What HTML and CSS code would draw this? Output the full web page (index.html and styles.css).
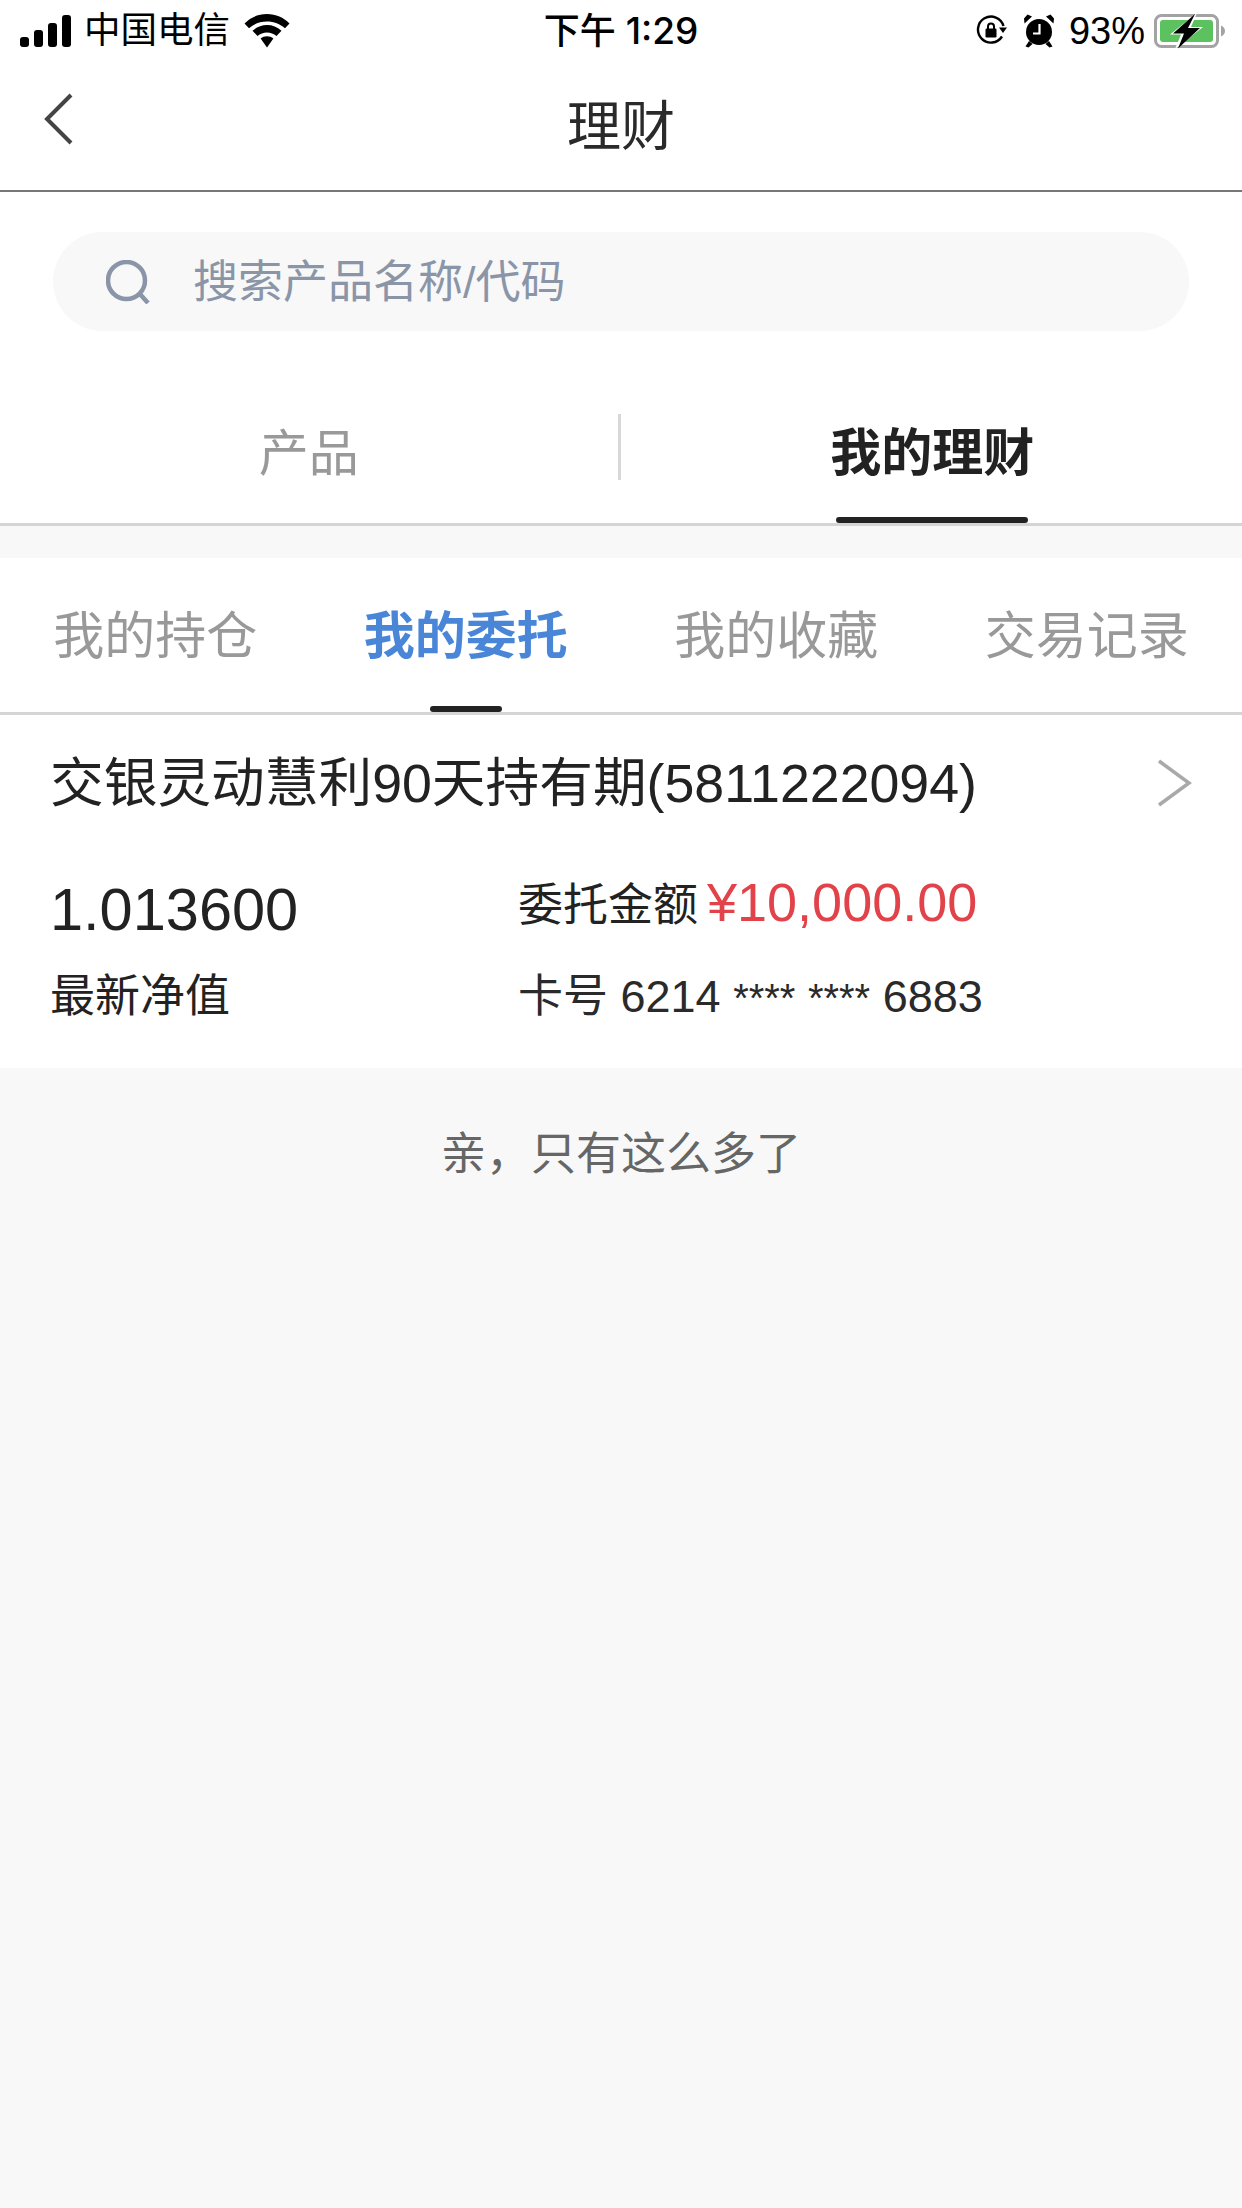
FILE: index.html
```html
<!DOCTYPE html>
<html lang="zh-CN">
<head>
<meta charset="utf-8">
<title>理财</title>
<link rel="stylesheet" href="styles.css">
</head>
<body>
<div class="page">
  <header class="status">
    <div class="status-left">
      <svg class="signal" width="52" height="32" viewBox="0 0 52 32"><rect x="0" y="22" width="9" height="10" rx="3"/><rect x="14" y="15" width="9" height="17" rx="3"/><rect x="28" y="8" width="9" height="24" rx="3"/><rect x="42" y="0" width="9" height="32" rx="3"/></svg>
      <span class="carrier">中国电信</span>
      <svg class="wifi" width="46" height="34" viewBox="0 0 46 34"><path d="M23 0C14 0 6.500 3.500 0.500 9.500L5 14.200C10 9.800 16 7.400 23 7.400S36 9.800 41 14.200L45.500 9.500C39.500 3.500 32 0 23 0Z"/><path d="M23 11C17.500 11 12.800 13 8.500 16.800L13.500 22C16.200 19.800 19.400 18.600 23 18.600S29.800 19.800 32.500 22L37.500 16.800C33.200 13 28.500 11 23 11Z"/><path d="M23 22.200C20.500 22.200 18.500 23 16.600 24.500L23 33.500L29.400 24.500C27.500 23 25.500 22.200 23 22.200Z"/></svg>
    </div>
    <div class="clock">下午 <span class="clock-time">1:29</span></div>
    <div class="status-right">
      <svg class="lock" width="32" height="32" viewBox="0 0 32 32"><path d="M26 21.500A13 13 0 1 1 27.500 11" fill="none" stroke="#000" stroke-width="2.400"/><path d="M23 12.500H31L27 18Z"/><rect x="9.500" y="13.500" width="11" height="9" rx="1.200"/><path d="M12 14V11.500A3 3 0 0 1 18 11.500V14" fill="none" stroke="#000" stroke-width="2"/></svg>
      <svg class="alarm" width="30" height="34" viewBox="0 0 30 34"><circle cx="15" cy="18" r="13"/><path d="M0.500 9.500L8 2.500L3.500 0.500L0 4.500ZM29.500 9.500L22 2.500L26.500 0.500L30 4.500ZM5 27L1.500 32.500L4.500 33.500L8.500 30ZM25 27L28.500 32.500L25.500 33.500L21.500 30Z"/><path d="M15.500 10V19.500H9" fill="none" stroke="#fff" stroke-width="2.200"/></svg>
      <span class="battery-text">93%</span>
      <svg class="battery" width="72" height="36" viewBox="0 0 72 36"><rect x="1.500" y="2.500" width="62" height="31" rx="6" fill="none" stroke="#a3a3a3" stroke-width="3"/><rect x="6" y="7" width="53" height="22" rx="3" fill="#5bc25f"/><path d="M67 12.500C69.500 13.500 71 15.500 71 18S69.500 22.500 67 23.500Z" fill="#a3a3a3"/><path d="M43 0L16 21.500H27L21 36L49 14H37Z" fill="#fff"/><path d="M41 1L19 20.500H30L24 35.500L46 15H34Z" fill="#000"/></svg>
    </div>
  </header>

  <nav class="nav">
    <svg class="back" width="30" height="52" viewBox="0 0 30 52"><path d="M27 2L3 26L27 50" fill="none" stroke="#444" stroke-width="4"/></svg>
    <h1 class="title">理财</h1>
    <span class="nav-spacer"></span>
  </nav>

  <div class="search-wrap">
    <div class="search">
      <svg class="search-icon" width="44" height="44" viewBox="0 0 44 44"><circle cx="20.500" cy="20.500" r="18.500" fill="none" stroke="#8a95a8" stroke-width="4.500"/><path d="M33 33L42 43" fill="none" stroke="#8a95a8" stroke-width="4.500"/></svg>
      <span class="placeholder">搜索产品名称/代码</span>
    </div>
  </div>

  <div class="main-tabs">
    <div class="main-tab">产品</div>
    <div class="main-divider"></div>
    <div class="main-tab is-active">我的理财</div>
  </div>

  <div class="sub-tabs">
    <div class="sub-tab">我的持仓</div>
    <div class="sub-tab is-active">我的委托</div>
    <div class="sub-tab">我的收藏</div>
    <div class="sub-tab">交易记录</div>
  </div>

  <section class="card">
    <div class="card-head">
      <div class="card-title">交银灵动慧利90天持有期(5811222094)</div>
      <svg class="chevron" width="36" height="48" viewBox="0 0 36 48"><path d="M3 2L33 24L3 46" fill="none" stroke="#a9a9a9" stroke-width="3.500"/></svg>
    </div>
    <div class="card-body">
      <div class="nav-value">1.013600</div>
      <div class="amount"><span class="amount-label">委托金额</span><span class="amount-value">¥10,000.00</span></div>
      <div class="nav-label">最新净值</div>
      <div class="card-no">卡号 6214 <span class="stars">****</span> <span class="stars">****</span> 6883</div>
    </div>
  </section>

  <div class="end-note">亲，只有这么多了</div>
</div>
</body>
</html>
```

FILE: styles.css
```css
* { box-sizing: border-box; }
html, body { margin: 0; padding: 0; }
body {
  background: #f8f8f8;
  font-family: "Liberation Sans", "Noto Sans CJK SC", sans-serif;
  color: #222;
}
.page { width: 1242px; height: 2208px; overflow: hidden; background: #f8f8f8; }

.status {
  height: 62px;
  background: #fff;
  color: #000;
  padding: 0 16px 0 20px;
  display: grid;
  grid-template-columns: 1fr auto 1fr;
  align-items: center;
}
.status-left, .status-right { display: flex; align-items: center; }
.status-right { justify-content: flex-end; }
.signal { margin-right: 12px; }
.carrier { font-size: 36.5px; line-height: 40px; }
.wifi { margin-left: 14px; }
.clock { font-size: 36px; line-height: 40px; font-weight: 500; margin-right: 4px; }
.clock-time { font-family: Inter, "Liberation Sans", sans-serif; font-size: 37px; }
.lock { margin-right: 16px; }
.alarm { margin-right: 15px; }
.battery-text { font-size: 38px; line-height: 40px; margin-right: 9px; }

.nav {
  height: 130px;
  background: #fff;
  border-bottom: 2px solid #777;
  display: grid;
  grid-template-columns: 1fr auto 1fr;
  align-items: center;
  padding: 0 44px;
}
.back { margin-top: -14px; }
.title { margin: 0; font-size: 54px; line-height: 60px; padding-top: 2px; font-weight: 400; color: #2a2a2a; }

.search-wrap { background: #fff; padding: 40px 53px 0; }
.search {
  height: 99px;
  border-radius: 50px;
  background: #f8f8f8;
  display: flex;
  align-items: center;
  padding-left: 53px;
}
.search-icon { margin-right: 43px; }
.placeholder { font-size: 45px; line-height: 56px; color: #8a95a8; padding-top: 2px; }

.main-tabs {
  height: 195px;
  padding-top: 70px;
  background: #fff;
  border-bottom: 3px solid #d5d5d5;
  display: grid;
  grid-template-columns: 1fr 3px 1fr;
}
.main-tab {
  position: relative;
  text-align: center;
  font-size: 50px;
  line-height: 66px;
  padding-top: 20px;
  padding-right: 2px;
  color: #999;
}
.main-tab.is-active { color: #222; font-weight: 700; font-size: 51px; padding-right: 0; }
.main-tab.is-active::after {
  content: "";
  position: absolute;
  left: 50%;
  bottom: 0;
  width: 192px;
  height: 6px;
  margin-left: -96px;
  border-radius: 3px;
  background: #222;
}
.main-divider { width: 3px; height: 66px; margin-top: 13px; margin-left: -2px; background: #d8d8d8; }

.sub-tabs {
  height: 157px;
  margin-top: 32px;
  background: #fff;
  border-bottom: 3px solid #d5d5d5;
  display: grid;
  grid-template-columns: repeat(4, 1fr);
}
.sub-tab {
  position: relative;
  text-align: center;
  font-size: 51px;
  line-height: 66px;
  padding-top: 46px;
  color: #999;
}
.sub-tab.is-active { color: #4a86d8; font-weight: 700; }
.sub-tab.is-active::after {
  content: "";
  position: absolute;
  left: 50%;
  bottom: 0;
  width: 72px;
  height: 6px;
  margin-left: -36px;
  border-radius: 3px;
  background: #222;
}

.card { height: 353px; background: #fff; padding: 0 50px 0 50px; }
.card-head {
  height: 136px;
  display: flex;
  align-items: center;
  justify-content: space-between;
}
.card-title { font-size: 53.7px; line-height: 64px; color: #222; }
.card-body {
  display: grid;
  grid-template-columns: 468px 1fr;
  grid-template-rows: 118px 56px;
  align-items: center;
}
.nav-value { font-size: 59.5px; line-height: 70px; color: #222; }
.amount { display: flex; align-items: baseline; margin-bottom: 12px; }
.amount-label { font-size: 45px; line-height: 60px; color: #222; }
.amount-value { font-size: 54px; line-height: 60px; color: #e2434b; margin-left: 9px; }
.nav-label { font-size: 45px; line-height: 56px; color: #222; }
.card-no { font-size: 45px; line-height: 56px; color: #2a2a2a; }
.stars { font-size: 40px; }

.end-note {
  padding-top: 57px;
  text-align: center;
  font-size: 45px;
  line-height: 60px;
  color: #666;
}
```
